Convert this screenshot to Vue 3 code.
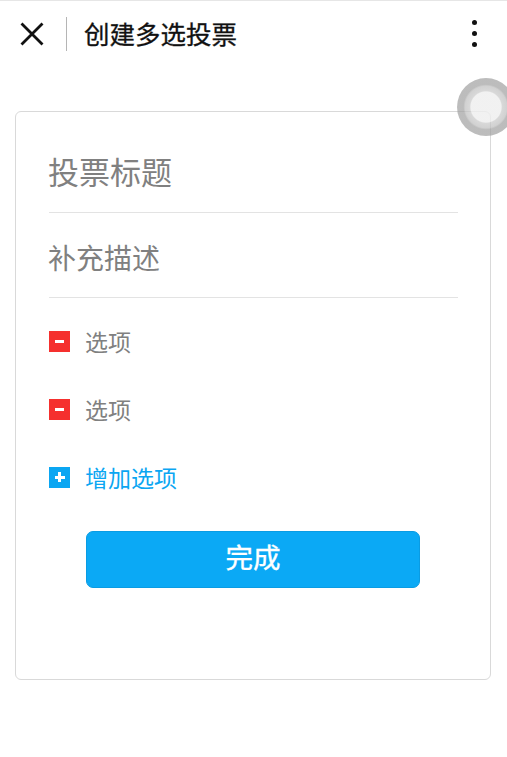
<script setup>
import { ref } from "vue";

const options = ref(["选项", "选项"]);
</script>

<template>
  <div class="page">
    <header class="top-bar">
      <svg class="close" viewBox="0 0 24 24" width="24" height="24">
        <path d="M1.5 1.5 L22.5 22.5 M22.5 1.5 L1.5 22.5" stroke="#111" stroke-width="2.8" fill="none" />
      </svg>
      <span class="divider"></span>
      <h1 class="title">创建多选投票</h1>
      <div class="more">
        <i></i>
        <i></i>
        <i></i>
      </div>
    </header>

    <main class="card">
      <div class="field field-title"><span>投票标题</span></div>
      <div class="field field-desc"><span>补充描述</span></div>

      <div class="option-list">
        <div v-for="(option, index) in options" :key="index" class="option">
          <span class="box box-red"><span class="minus"></span></span>
          <span class="option-text">{{ option }}</span>
        </div>

        <div class="option add">
          <span class="box box-blue"><span class="plus"></span></span>
          <span class="add-text">增加选项</span>
        </div>
      </div>

      <button class="done">完成</button>
    </main>

    <div class="float-ball"></div>
  </div>
</template>

<style>
html,
body {
  margin: 0;
  background: #fff;
}
</style>

<style scoped>
.page {
  position: relative;
  width: 507px;
  height: 757px;
  overflow: hidden;
  background: #fff;
  font-family: "Noto Sans CJK SC", "Liberation Sans", sans-serif;
  box-sizing: border-box;
  border-top: 1px solid #e6e6e6;
}

.top-bar {
  display: flex;
  align-items: center;
  height: 65px;
  padding: 0 20px 0 20px;
}

.close {
  flex-shrink: 0;
}

.divider {
  width: 1px;
  height: 34px;
  margin-left: 22px;
  background: #b5b5b5;
}

.title {
  margin: 0 0 0 17px;
  font-size: 25.5px;
  font-weight: 400;
  -webkit-text-stroke: 0.3px #111;
  color: #111;
  flex: 1;
  position: relative;
  top: -1px;
}

.more {
  display: flex;
  flex-direction: column;
  gap: 6px;
  margin-right: 10px;
}

.more i {
  display: block;
  width: 5px;
  height: 5px;
  border-radius: 50%;
  background: #111;
}

.card {
  box-sizing: border-box;
  width: 476px;
  height: 569px;
  margin: 45px 0 0 15px;
  padding: 0 32px 0 33px;
  border: 1px solid #d9d9d9;
  border-radius: 6px;
}

.field {
  color: #808080;
  border-bottom: 1px solid #e3e3e3;
}

.field span {
  margin-left: -1px;
}

.field-title {
  height: 100px;
  line-height: 118px;
  font-size: 31px;
}

.field-desc {
  height: 84px;
  line-height: 88px;
  font-size: 28px;
}

.option-list {
  padding-top: 9px;
}

.option {
  display: flex;
  align-items: center;
  height: 68px;
}

.box {
  position: relative;
  width: 21px;
  height: 21px;
  margin-right: 15px;
}

.box-red {
  background: #f5302e;
}

.box-blue {
  background: #0ba6f2;
}

.minus {
  position: absolute;
  left: 6px;
  top: 9px;
  width: 9px;
  height: 3px;
  background: #fff;
}

.plus {
  position: absolute;
  left: 5px;
  top: 5px;
  width: 11px;
  height: 11px;
  background:
    linear-gradient(#fff, #fff) center / 10px 3px no-repeat,
    linear-gradient(#fff, #fff) center / 3px 10px no-repeat;
}

.option-text {
  color: #808080;
  font-size: 23px;
}

.add-text {
  color: #0ba6f2;
  font-size: 23px;
}

.done {
  display: block;
  width: 334px;
  height: 57px;
  margin: 20px 0 0 37px;
  padding: 0 0 7px;
  border: 1px solid #0a9ce3;
  border-radius: 7px;
  background: #0ba9f5;
  color: #fff;
  font-family: inherit;
  font-size: 27.5px;
  font-weight: 400;
  -webkit-text-stroke: 0.4px #fff;
}

.float-ball {
  position: absolute;
  left: 457px;
  top: 77px;
  width: 58px;
  height: 58px;
  border-radius: 50%;
  background: radial-gradient(
    circle closest-side,
    rgba(238, 238, 238, 0.8) 0,
    rgba(238, 238, 238, 0.8) 52%,
    rgba(200, 200, 200, 0.7) 56%,
    rgba(190, 190, 190, 0.7) 72%,
    rgba(160, 160, 160, 0.7) 78%,
    rgba(160, 160, 160, 0.7) 100%
  );
}
</style>
